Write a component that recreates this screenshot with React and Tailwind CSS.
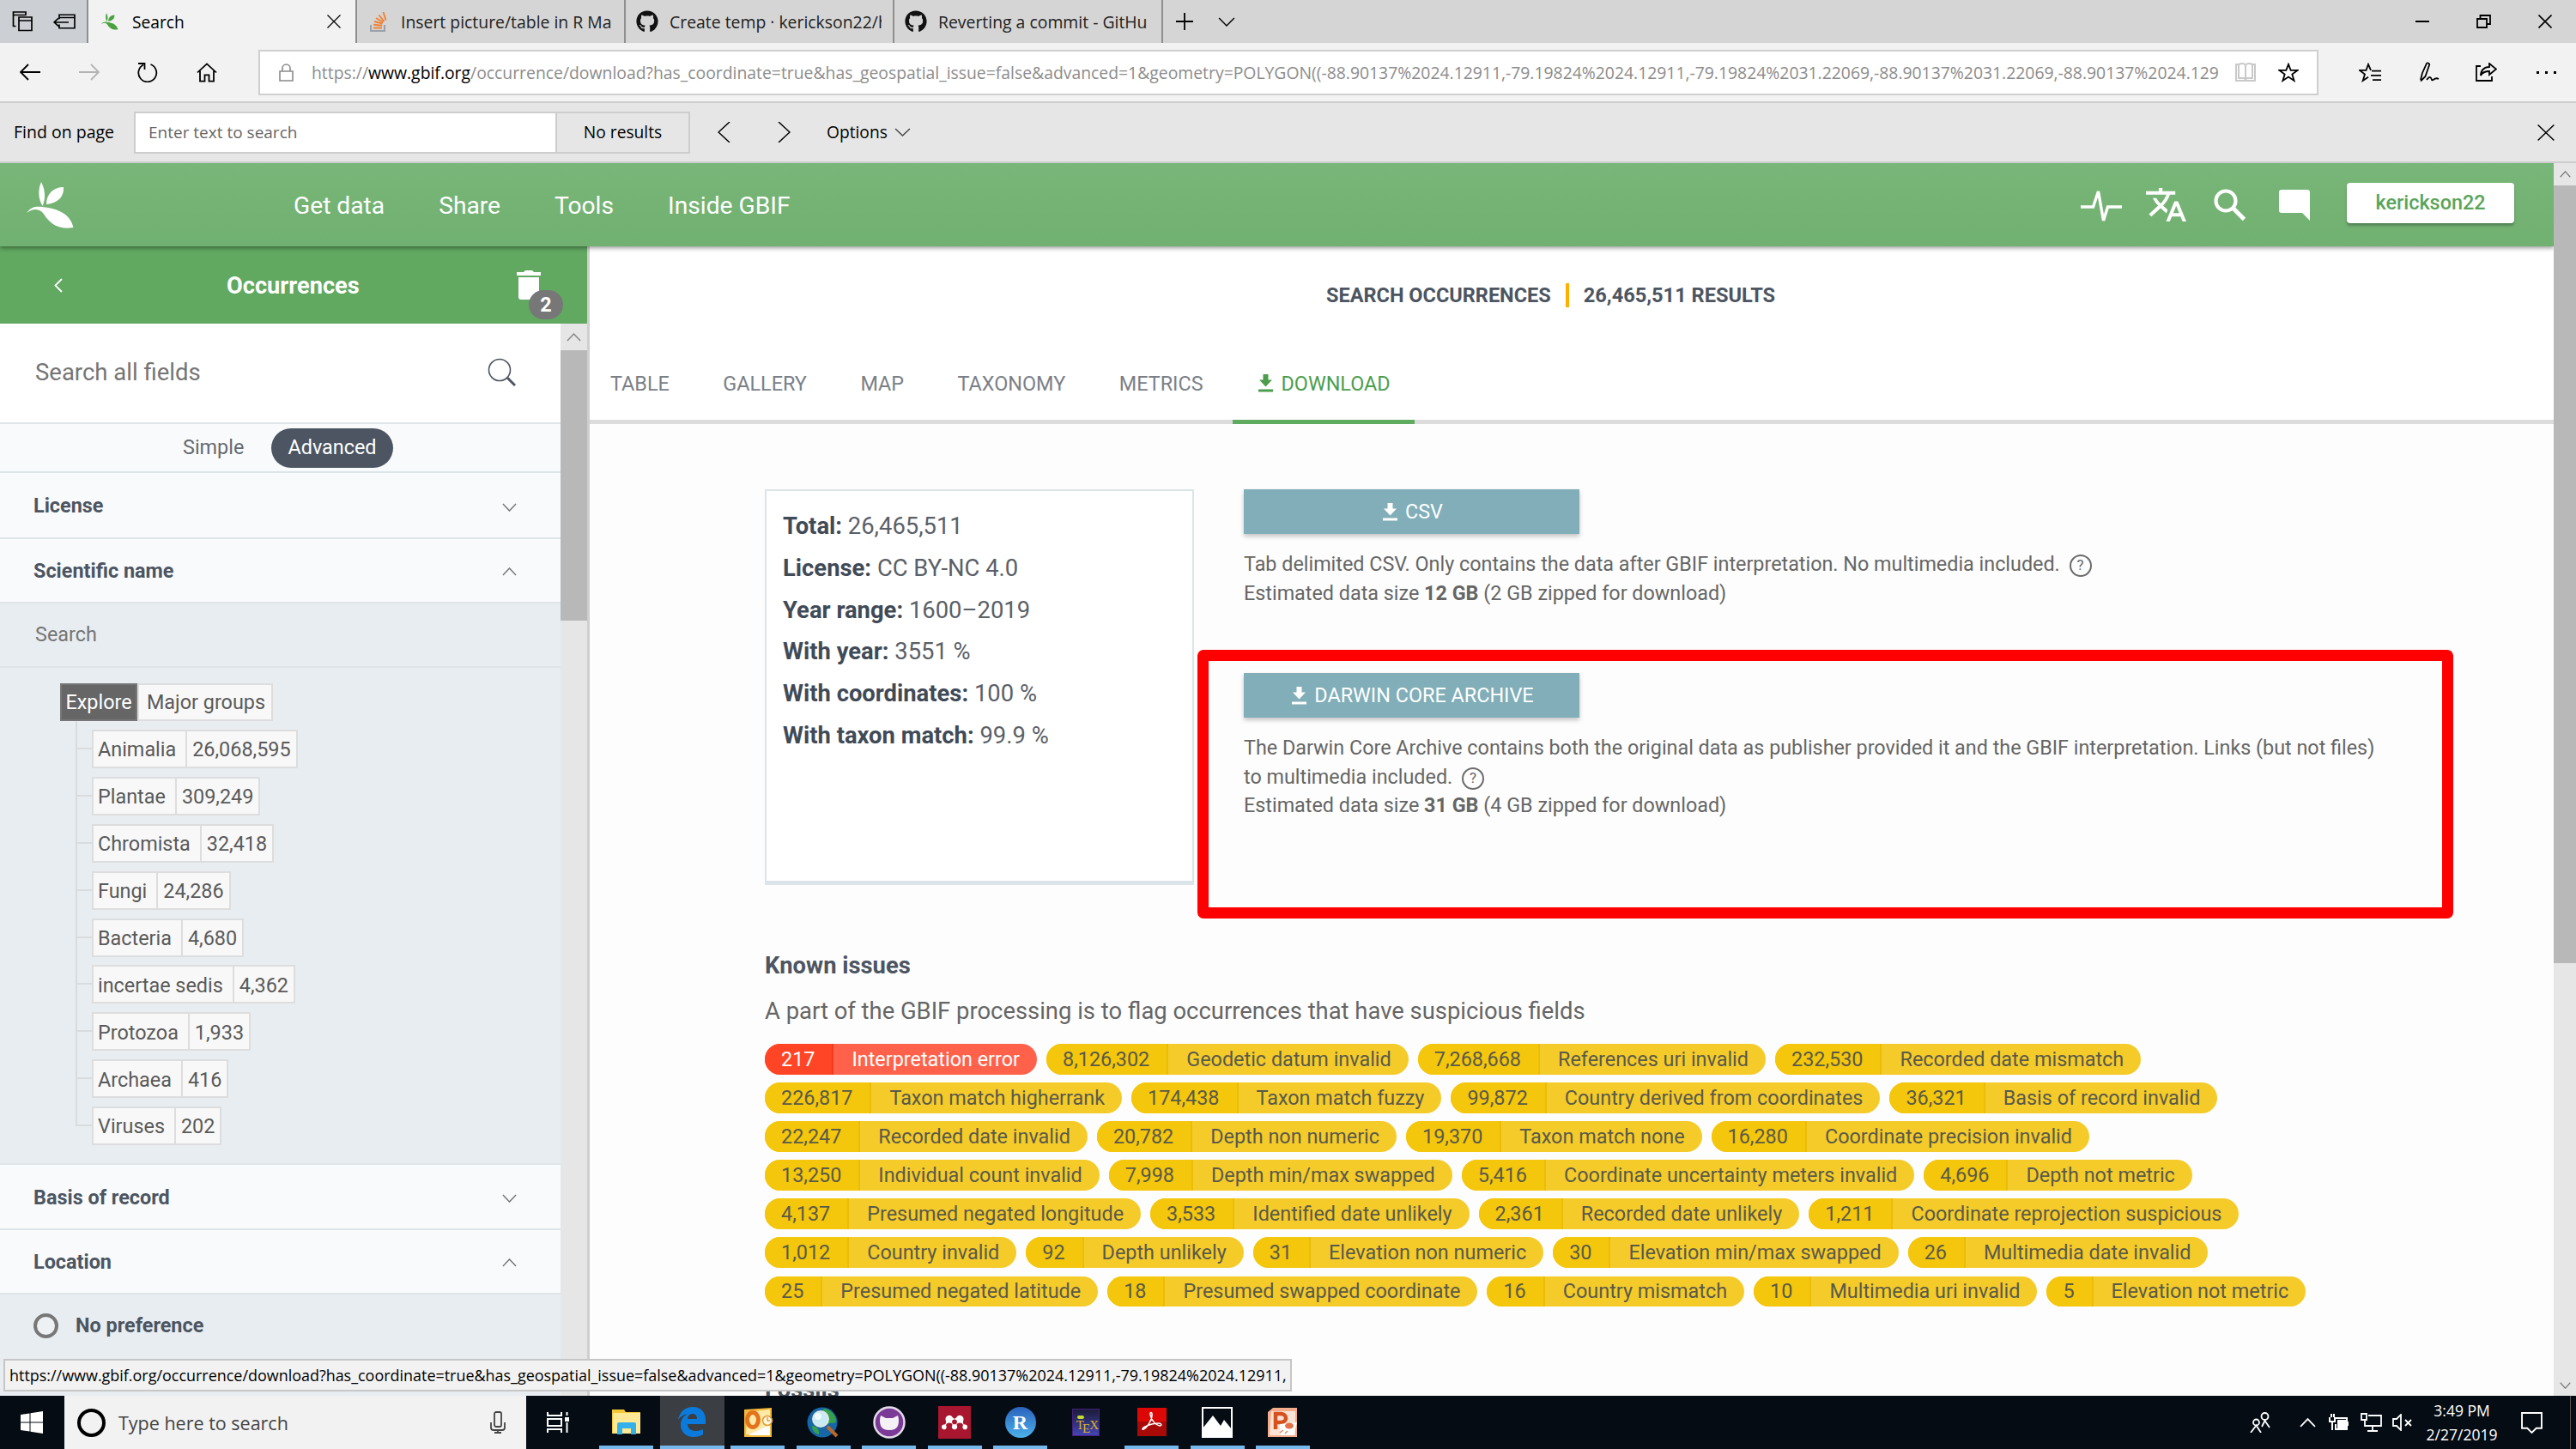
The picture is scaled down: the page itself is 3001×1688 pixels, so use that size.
import React from "react";
import { FaGithub, FaMendeley } from "react-icons/fa";

const TREE = [
  ["Animalia", "26,068,595"],
  ["Plantae", "309,249"],
  ["Chromista", "32,418"],
  ["Fungi", "24,286"],
  ["Bacteria", "4,680"],
  ["incertae sedis", "4,362"],
  ["Protozoa", "1,933"],
  ["Archaea", "416"],
  ["Viruses", "202"],
];

const ISSUES = [
  [["217", "Interpretation error"], ["8,126,302", "Geodetic datum invalid"], ["7,268,668", "References uri invalid"], ["232,530", "Recorded date mismatch"]],
  [["226,817", "Taxon match higherrank"], ["174,438", "Taxon match fuzzy"], ["99,872", "Country derived from coordinates"], ["36,321", "Basis of record invalid"]],
  [["22,247", "Recorded date invalid"], ["20,782", "Depth non numeric"], ["19,370", "Taxon match none"], ["16,280", "Coordinate precision invalid"]],
  [["13,250", "Individual count invalid"], ["7,998", "Depth min/max swapped"], ["5,416", "Coordinate uncertainty meters invalid"], ["4,696", "Depth not metric"]],
  [["4,137", "Presumed negated longitude"], ["3,533", "Identified date unlikely"], ["2,361", "Recorded date unlikely"], ["1,211", "Coordinate reprojection suspicious"]],
  [["1,012", "Country invalid"], ["92", "Depth unlikely"], ["31", "Elevation non numeric"], ["30", "Elevation min/max swapped"], ["26", "Multimedia date invalid"]],
  [["25", "Presumed negated latitude"], ["18", "Presumed swapped coordinate"], ["16", "Country mismatch"], ["10", "Multimedia uri invalid"], ["5", "Elevation not metric"]],
];

const STATS = [
  ["Total:", "26,465,511"],
  ["License:", "CC BY-NC 4.0"],
  ["Year range:", "1600–2019"],
  ["With year:", "3551 %"],
  ["With coordinates:", "100 %"],
  ["With taxon match:", "99.9 %"],
];

function Icon({ className, box = "0 0 24 24", w = 1.5, children }) {
  return (
    <svg className={className} viewBox={box} preserveAspectRatio="none" fill="none" stroke="currentColor" strokeWidth={w}>
      {children}
    </svg>
  );
}

const Cross = ({ className, w = 1.5 }) => (
  <Icon className={className} box="0 0 16 16" w={w}><path d="M.5.5l15 15M15.5.5l-15 15" /></Icon>
);
const Down = ({ className, w = 1.6 }) => (
  <Icon className={className} box="0 0 18 10" w={w}><path d="M1 1l8 8 8-8" /></Icon>
);
const Up = ({ className, w = 1.6 }) => (
  <Icon className={className} box="0 0 18 10" w={w}><path d="M1 9l8-8 8 8" /></Icon>
);
const DownloadIcon = () => (
  <svg className="w-[17px] h-[21px]" viewBox="0 0 17 21" fill="currentColor">
    <path d="M5.5 0h6v6.5h4.5L8.500 14.500 1 6.500h4.500zM0 17.500h17v3H0z" />
  </svg>
);
const Help = () => (
  <span className="inline-flex w-[26px] h-[26px] rounded-full border-2 border-[#6b6b6b] items-center justify-center text-[17px] leading-none align-middle ml-[5px]">?</span>
);
const Leaf = ({ className }) => (
  <svg className={className} viewBox="0 0 56 54" fill="currentColor">
    <path d="M17 0c4 8 6 18 1.500 28-5-8-5.500-19-1.500-28z" />
    <path d="M43 6c1 10-6 19-20 20C23 14 31 6 43 6z" />
    <path d="M0 36c5-7 11-8 18-7 20 2 33 9 36.500 24-17 3-27-4-34-15-5-7-12-8-20.500-2z" />
  </svg>
);

function Tab({ icon, label }) {
  return (
    <div className="w-[313px] h-[50px] border-l-2 border-[#8f8f8f] bg-[#d5d5d5] flex items-center pl-[11px] shrink-0">
      <div className="w-[28px] flex justify-center mr-[12px] shrink-0">{icon}</div>
      <div className="w-[247px] overflow-hidden whitespace-nowrap text-[19.4px] text-[#222] pt-[2px]">{label}</div>
    </div>
  );
}

function BrowserTop() {
  return (
    <div className="font-['Open_Sans',sans-serif] text-black">
      <div className="flex h-[50px] items-center bg-[#d5d5d5]">
        <div className="w-[101px] h-[50px] shrink-0 bg-[#ccd0d4] flex items-center pl-[14px] gap-[24px]">
          <Icon className="w-[24px] h-[24px]" w={1.7}>
            <path d="M4.500 17.500H1.500V1h14.500v4M1.500 4.500H16M8 22.500V7h15v15.500zM8 11h15" />
          </Icon>
          <Icon className="w-[26px] h-[18px]" box="0 0 26 20" w={1.7}>
            <path d="M7 7V1.500h18v17H7V14M7 5h18M18 11H1M6 6l-5 5 5 5" />
          </Icon>
        </div>
        <div className="w-[313px] h-[50px] shrink-0 bg-[#f2f2f2] border-l-2 border-[#8f8f8f] flex items-center pl-[15px]">
          <Leaf className="w-[20px] h-[20px] text-[#4aa13f]" />
          <span className="ml-[16px] text-[19.2px] grow pt-[2px]">Search</span>
          <Cross className="w-[16px] h-[16px] mr-[17px]" w={1.2} />
        </div>
        <Tab label="Insert picture/table in R Ma" icon={
          <Icon className="w-[20px] h-[23px]" box="0 0 20 23" w={2}>
            <path d="M1 15v7h16v-7" stroke="#9aa1a8" />
            <path d="M4 18.500h10M4.200 14.800l10 1M5 11l9.600 2.500M7 7l8.500 5M10.500 3.500l6 7.500M15.500 0l3 9.500" stroke="#ef8236" />
          </Icon>} />
        <Tab label="Create temp · kerickson22/h" icon={<FaGithub className="size-[26px] text-[#111]" />} />
        <Tab label="Reverting a commit - GitHu" icon={<FaGithub className="size-[26px] text-[#111]" />} />
        <div className="h-[50px] w-[2px] bg-[#8f8f8f]" />
        <Icon className="w-[20px] h-[20px] ml-[15px]" box="0 0 20 20" w={1.8}><path d="M10 0v20M0 10h20" /></Icon>
        <Down className="w-[20px] h-[11px] ml-[29px]" w={1.3} />
        <div className="grow" />
        <div className="w-[16px] h-[2px] bg-black" />
        <Icon className="w-[17px] h-[16px] ml-[55px]" box="0 0 17 16" w={1.8}><path d="M1 5h11v10H1zM4.500 5V1H16v10h-4" /></Icon>
        <Cross className="w-[16px] h-[16px] ml-[55px] mr-[28px]" w={1.6} />
      </div>
      <div className="flex h-[68px] items-center bg-[#f2f2f2]">
        <Icon className="w-[24px] h-[20px] ml-[23px]" box="0 0 24 20" w={1.8}><path d="M24 10H1M10 1l-9 9 9 9" /></Icon>
        <Icon className="w-[24px] h-[20px] ml-[45px] text-[#b4b4b4]" box="0 0 24 20" w={1.8}><path d="M0 10h23M14 1l9 9-9 9" /></Icon>
        <Icon className="w-[24px] h-[24px] ml-[44px]" w={1.8}><path d="M7 3.500A10.500 10.500 0 1 0 15.500 3M1 2h7.500v7" /></Icon>
        <Icon className="w-[24px] h-[23px] ml-[45px]" w={1.8}><path d="M1 12L12 1.500 23 12M4 10v12.500h5.500V15h5v7.500H20V10" /></Icon>
        <div className="w-[2400px] h-[53px] ml-[48px] bg-white border-2 border-[#cfcfcf] flex items-center">
          <Icon className="w-[17px] h-[21px] ml-[22px] text-[#8a8a8a]" box="0 0 17 21" w={1.6}><path d="M1 9h15v11H1zM4 9V5.500a4.500 4.500 0 0 1 9 0V9" /></Icon>
          <div className="ml-[21px] w-[2228px] shrink-0 whitespace-nowrap overflow-hidden pt-[2px] text-[19.37px] text-[#8c8c8c]">
            https://<span className="text-black">www.gbif.org</span>/occurrence/download?has_coordinate=true&amp;has_geospatial_issue=false&amp;advanced=1&amp;geometry=POLYGON((-88.90137%2024.12911,-79.19824%2024.12911,-79.19824%2031.22069,-88.90137%2031.22069,-88.90137%2024.129
          </div>
          <Icon className="w-[24px] h-[22px] ml-[13px] text-[#c9c9c9]" box="0 0 24 22" w={2}><path d="M1 2h3v16h7l1 2 1-2h7V2h3v19H1zM4 2c4-1.500 7-.500 8 1 1-1.500 4-2.500 8-1M12 3v16" /></Icon>
          <Icon className="w-[24px] h-[23px] ml-[26px]" w={1.8}><path d="M12 2l2.700 7.300h7.800l-6.200 4.800 2.300 7.800L12 17.300l-6.600 4.600 2.300-7.800L1.500 9.300h7.800z" /></Icon>
        </div>
        <Icon className="w-[26px] h-[23px] ml-[47px]" box="0 0 26 24" w={1.8}><path d="M14 9.300L11 2 8.500 9.300H1l6 4.800-2.300 7.800L11 17.500M15 10h11M14 15.500h12M16 21h10" /></Icon>
        <Icon className="w-[24px] h-[24px] ml-[44px]" w={1.8}><path d="M2 21L4 13 9 2c1-1.500 4 0 3 2L7.500 17 2 22.500M9 21c4-5 5-3 6 0 2 2 3-4 8-1" /></Icon>
        <Icon className="w-[25px] h-[22px] ml-[42px]" box="0 0 25 22" w={1.8}><path d="M6 4H1v17h18v-5M16 1l8 6.500-8 6.500v-4c-5 0-8 1-10 5 0-6 4-10 10-10z" /></Icon>
        <div className="flex gap-[7px] ml-[46px]">
          <div className="size-[3px] bg-black" /><div className="size-[3px] bg-black" /><div className="size-[3px] bg-black" />
        </div>
      </div>
      <div className="flex h-[72px] items-center bg-[#e6e6e6] border-y-2 border-[#cdcdcd] text-[19.2px]">
        <div className="w-[156px] pl-[16px] whitespace-nowrap text-[19.5px]">Find on page</div>
        <div className="w-[493px] h-[49px] bg-white border-2 border-[#cdcdcd] flex items-center pl-[15px] text-[#666] text-[19px]">Enter text to search</div>
        <div className="w-[155px] h-[49px] border-y-2 border-r-2 border-[#cdcdcd] flex items-center justify-center">No results</div>
        <Icon className="w-[15px] h-[24px] ml-[32px]" box="0 0 15 24" w={1.5}><path d="M14 0L1 12l13 12" /></Icon>
        <Icon className="w-[15px] h-[24px] ml-[55px]" box="0 0 15 24" w={1.5}><path d="M1 0l13 12L1 24" /></Icon>
        <div className="ml-[42px]">Options</div>
        <Down className="w-[19px] h-[10px] ml-[8px] text-[#444]" w={1.3} />
        <div className="grow" />
        <Cross className="w-[20px] h-[19px] mr-[25px]" w={1.2} />
      </div>
    </div>
  );
}

function SiteHeader() {
  return (
    <div className="relative z-10 h-[97px] bg-linear-to-b from-[#79b679] to-[#70b070] shadow-[0_2px_5px_rgba(0,0,0,0.4)] flex items-center text-white text-[28.2px]">
      <Leaf className="w-[56px] h-[54px] ml-[31px]" />
      <div className="flex gap-[63px] ml-[255px] whitespace-nowrap pt-[3px]">
        <span>Get data</span><span>Share</span><span>Tools</span><span>Inside GBIF</span>
      </div>
      <div className="grow" />
      <Icon className="w-[48px] h-[42px]" box="0 0 48 42" w={3.4}><path d="M0 23h14.500l6-18 6 34 5-16H48" /></Icon>
      <svg className="w-[47px] h-[43px] ml-[28px]" viewBox="1 1 22 22" preserveAspectRatio="none" fill="currentColor">
        <path d="M12.870 15.070l-2.540-2.510.03-.030c1.740-1.940 2.980-4.170 3.710-6.530H17V4h-7V2H8v2H1v1.990h11.170C11.500 7.920 10.440 9.750 9 11.350 8.070 10.320 7.300 9.190 6.690 8h-2c.73 1.630 1.730 3.170 2.980 4.560l-5.090 5.020L4 19l5-5 3.110 3.110.76-2.040zM18.500 10h-2L12 22h2l1.120-3h4.750L21 22h2l-4.500-12zm-2.620 7l1.620-4.330L19.120 17h-3.240z" />
      </svg>
      <Icon className="w-[37px] h-[37px] ml-[32px]" box="0 0 37 37" w={4.2}><circle cx="14" cy="14" r="11.500" /><path d="M22 22l13.500 13.500" strokeWidth="5" /></Icon>
      <svg className="w-[36px] h-[36px] ml-[39px]" viewBox="0 0 36 36" fill="currentColor"><path d="M3 0h30q3 0 3 3v33l-9-9H3q-3 0-3-3V3q0-3 3-3z" /></svg>
      <div className="w-[195px] h-[47px] mb-[5px] ml-[43px] mr-[46px] rounded-[4px] bg-white shadow-[0_3px_3px_rgba(0,0,0,0.25)] text-[#5aa55a] text-[23.4px] font-medium flex items-center justify-center pt-[1px]">kerickson22</div>
    </div>
  );
}

const Section = ({ label, open, className }) => (
  <div className={`flex items-center justify-between pl-[39px] pr-[51px] bg-[#f9fafc] border-b-2 border-[#dde5e9] font-bold ${className}`}>
    <span className="pt-[2px]">{label}</span>
    {open ? <Up className="w-[17px] h-[10px] mt-[2px] text-[#777]" /> : <Down className="w-[17px] h-[10px] mt-[4px] text-[#777]" />}
  </div>
);

function Sidebar() {
  return (
    <div className="w-[687px] shrink-0 border-r-3 border-[#cfcfcf] flex flex-col text-[#4c5561] text-[23.4px]">
      <div className="h-[90px] shrink-0 bg-[#61a861] flex items-center text-white">
        <Icon className="w-[10px] h-[17px] ml-[63px]" box="0 0 10 17" w={1.8}><path d="M9 1L1.500 8.500 9 16" /></Icon>
        <span className="ml-[191px] text-[27.2px] font-bold w-[155px] pt-[3px]">Occurrences</span>
        <div className="relative ml-[183px]">
          <svg className="w-[28px] h-[34px]" viewBox="0 0 28 34" fill="currentColor"><path d="M0 2h8l2-2h8l2 2h8v4H0zM2 8h24v23q0 3-3 3H5q-3 0-3-3z" /></svg>
          <div className="absolute left-[14px] top-[23px] w-[40px] h-[34px] rounded-full bg-[#777] font-bold flex items-center justify-center">2</div>
        </div>
      </div>
      <div className="flex grow">
        <div className="w-[653px] flex flex-col bg-[#e8edf1]">
          <div className="h-[117px] bg-white border-b-2 border-[#dde5e9] flex items-center justify-between pl-[41px] pr-[52px] text-[27.5px] text-[#757575]">
            <span className="-mt-[1px]">Search all fields</span>
            <Icon className="w-[33px] h-[33px] -mt-[3px] text-[#4c5561]" box="0 0 33 33" w={1.6}><circle cx="14" cy="14" r="12.500" /><path d="M23 23l9 9" strokeWidth="3" /></Icon>
          </div>
          <div className="h-[57px] bg-[#f9fafc] border-b-2 border-[#dde5e9] flex items-center pl-[213px]">
            <span className="w-[103px] text-[#656a70]">Simple</span>
            <span className="w-[142px] h-[46px] rounded-full bg-[#4c5561] text-white flex items-center justify-center">Advanced</span>
          </div>
          <Section label="License" className="h-[77px]" />
          <Section label="Scientific name" open className="h-[75px]" />
          <div className="h-[75px] border-b-2 border-[#dde3e7] flex items-center pl-[41px] text-[#757575]">Search</div>
          <div className="h-[579px] pt-[18px] text-[#5a5a5a] border-b-2 border-[#dde5e9]">
            <div className="flex h-[44px] ml-[70px]">
              <div className="w-[90px] bg-[#666] border-2 border-[#777] text-white flex items-center justify-center pt-[1px]">Explore</div>
              <div className="w-[158px] bg-[#f8f8f8] border-2 border-[#ddd] flex items-center justify-center pl-[2px] pt-[1px]">Major groups</div>
            </div>
            <div className="ml-[88px]">
              {TREE.map(([name, n], i) => (
                <div key={name} className="flex h-[54.9px]">
                  <div className="w-[19px]">
                    <div className="h-[33px] border-l-2 border-b-2 border-[#d9dcde]" />
                    {i < TREE.length - 1 && <div className="h-[22px] border-l-2 border-[#d9dcde]" />}
                  </div>
                  <div className="mt-[10px] h-[45px] border-2 border-[#ddd] bg-[#f8f8f8] flex">
                    <span className="flex items-center pl-[5px] pr-[11px] pt-[2px] border-r-2 border-[#ddd]">{name}</span>
                    <span className="flex items-center px-[6px] pt-[2px]">{n}</span>
                  </div>
                </div>
              ))}
            </div>
          </div>
          <Section label="Basis of record" className="h-[76px]" />
          <Section label="Location" open className="h-[75px]" />
          <div className="flex h-[72px] items-center pl-[39px] font-bold">
            <div className="size-[29px] rounded-full border-4 border-[#777] bg-[#eef1f4] mr-[20px]" />
            No preference
          </div>
        </div>
        <div className="w-[31px] bg-[#e6e6e6] flex flex-col items-center pt-[11px]">
          <Up className="w-[17px] h-[10px] text-[#888]" />
          <div className="w-full h-[315px] mt-[10px] bg-[#b8b8b8]" />
        </div>
      </div>
    </div>
  );
}

const DownloadButton = ({ children }) => (
  <div className="w-[391px] h-[52px] bg-[#81aeb8] shadow-[0_3px_5px_rgba(0,0,0,0.22)] text-white flex items-center justify-center gap-[9px] pl-[3px] pt-[1px]">
    <DownloadIcon />{children}
  </div>
);

function Chip({ n, label, error }) {
  return (
    <div className={error ? "flex h-full rounded-full overflow-hidden bg-[#ff614a] text-white" : "flex h-full rounded-full overflow-hidden bg-[#f5cb2a] text-[#5a5a4a]"}>
      <span className={error ? "flex items-center pl-[19px] pr-[20px] bg-[#ff4526] border-r-2 border-[#f03c1e]" : "flex items-center pl-[19px] pr-[20px] bg-[#f4c60c] border-r-2 border-[#eabd08]"}>{n}</span>
      <span className="flex items-center pl-[21px] pr-[20px]">{label}</span>
    </div>
  );
}

function Main() {
  return (
    <div className="relative grow bg-[#fdfdfd] text-[#666] text-[23.4px] whitespace-nowrap">
      <div className="h-[207px] bg-white border-b-5 border-[#dcdcdc] flex flex-col">
        <div className="flex items-center pl-[858px] pt-[42px] text-[#4c5561] font-bold">
          <span className="text-[23.5px]">SEARCH OCCURRENCES</span>
          <div className="w-[4px] h-[28px] bg-[#ffaf00] mx-[17px]" />
          <span className="text-[23.6px]">26,465,511 RESULTS</span>
        </div>
        <div className="flex pl-[24px] mt-auto -mb-[5px] h-[95px] gap-[62.5px] text-[#7b8087] leading-[96px]">
          <span>TABLE</span>
          <span>GALLERY</span>
          <span>MAP</span>
          <span>TAXONOMY</span>
          <span>METRICS</span>
          <span className="-ml-[28px] w-[212px] border-b-5 border-[#5fab5f] text-[#4c9e4c] flex items-center justify-center gap-[9px] pt-[5px] pl-[2px]"><DownloadIcon />DOWNLOAD</span>
        </div>
      </div>
      <div className="flex pl-[204px] pt-[76px]">
        <div className="w-[500px] h-[461px] bg-white border-2 border-b-5 border-[#dbe4e9] pl-[19px] pt-[17px] text-[27.4px] text-[#5b6067]">
          {STATS.map(([k, v]) => (
            <div key={k} className="h-[48.8px] leading-[48.8px]"><b className="text-[#414a57]">{k}</b> {v}</div>
          ))}
        </div>
        <div className="ml-[58px]">
          <DownloadButton>CSV</DownloadButton>
          <div className="mt-[19px] h-[143px] leading-[33px] text-[23.35px]">
            <div className="h-[34px]">Tab delimited CSV. Only contains the data after GBIF interpretation. No multimedia included. <Help /></div>
            <div>Estimated data size <b>12 GB</b> (2 GB zipped for download)</div>
          </div>
          <DownloadButton>DARWIN CORE ARCHIVE</DownloadButton>
          <div className="mt-[18px] leading-[34px] text-[23.35px]">
            <div>The Darwin Core Archive contains both the original data as publisher provided it and the GBIF interpretation. Links (but not files)</div>
            <div className="h-[33px]">to multimedia included. <Help /></div>
            <div>Estimated data size <b>31 GB</b> (4 GB zipped for download)</div>
          </div>
        </div>
      </div>
      <div className="pl-[204px]">
        <div className="mt-[73px] h-[42px] leading-[43px] text-[27.35px] font-bold text-[#4c5561]">Known issues</div>
        <div className="mt-[11px] h-[42px] leading-[43px] text-[27.4px]">A part of the GBIF processing is to flag occurrences that have suspicious fields</div>
        <div className="mt-[17px]">
          {ISSUES.map((row, r) => (
            <div key={r} className="flex h-[35.5px] mb-[9.6px] gap-[11px]">
              {row.map(([n, label], i) => <Chip key={label} n={n} label={label} error={r === 0 && i === 0} />)}
            </div>
          ))}
        </div>
        <div className="mt-[74px] h-[32px] leading-[46px] overflow-hidden text-[27.35px] font-bold text-[#4c5561]">Fossils</div>
      </div>
      <div className="absolute left-[708px] top-[470px] w-[1463px] h-[313px] rounded-[7px] border-[13px] border-[#ff0000]" />
    </div>
  );
}

function TaskItem({ children, active, idle }) {
  return (
    <div className={active ? "w-[75px] h-full bg-[#3b3e42] flex flex-col items-center" : "w-[63px] h-full flex flex-col items-center"}>
      <div className="h-[58px] flex items-center pt-[3px]">{children}</div>
      <div className={idle ? "hidden" : "h-[4px] w-full bg-[#76b9ed]"} />
    </div>
  );
}

function Taskbar() {
  return (
    <div className="h-[62px] bg-[#050c14] flex items-center text-white font-['Open_Sans',sans-serif] shrink-0">
      <svg className="w-[26px] h-[26px] ml-[24px]" viewBox="0 0 26 26" fill="currentColor"><path d="M0 4l10.500-1.500v10H0zM11.500 2.300L26 0v12.500H11.500zM0 13.500h10.500v10L0 22zM11.500 13.500H26V26l-14.500-2.200z" /></svg>
      <div className="w-[538px] h-[62px] ml-[25px] bg-[#f2f2f2] flex items-center text-[#444] text-[21.5px]">
        <div className="size-[33px] ml-[15px] rounded-full border-4 border-black" />
        <span className="ml-[15px] grow pt-[1px]">Type here to search</span>
        <Icon className="w-[18px] h-[26px] mr-[24px]" box="0 0 18 26" w={1.8}><rect x="5" y="1" width="8" height="17" rx="2" /><path d="M1 13v6q0 3 3 3h10q3 0 3-3v-6M9 22v3M5 25h8" /></Icon>
      </div>
      <Icon className="w-[27px] h-[24px] ml-[24px]" box="0 0 27 24" w={2}>
        <path d="M1 0v4h16V0M1 24v-4h16v4M1 8h16v8H1zM23.500 0v4M23.500 12v12" /><path d="M21 6h5v5h-5z" fill="currentColor" stroke="none" />
      </Icon>
      <div className="flex h-[62px] ml-[34px]">
        <div className="flex gap-[13.5px] h-full">
          <TaskItem>
            <svg className="w-[34px] h-[29px]" viewBox="0 0 34 29"><path d="M0 0h14l2 3h17v25H0z" fill="#f5c733" /><path d="M1 4h32v24H1z" fill="#ffe896" /><path d="M6 29V17q0-2 2-2h18q2 0 2 2v12h-6v-7H12v7z" fill="#33b1e8" /></svg>
          </TaskItem>
          <div className="-mx-[6px] h-full">
            <TaskItem active>
              <svg className="w-[32px] h-[35px]" viewBox="0 0 32 35" fill="#0a7bdc"><path d="M0 15C2 5 9 0 17 0c9 0 15 6 15 15v5H11c0 6 5 8 10 8 3 0 6-1 8-2v6c-3 2-7 3-11 3C9 35 3 29 3 21c0-6 3-10 8-13-5 1-8 3-11 7zm11-1h11c0-4-2-6-5-6s-6 2-6 6z" /></svg>
            </TaskItem>
          </div>
          <TaskItem>
            <svg className="w-[36px] h-[34px]" viewBox="0 0 36 34"><path d="M2 2L34 0v34H2z" fill="#f2b93c" /><path d="M6 5l26-3v29H4z" fill="#ffe9a6" /><path d="M8 31l24-11v12H8z" fill="#fff" /><ellipse cx="12" cy="14" rx="6.500" ry="8.500" fill="none" stroke="#e1741c" strokeWidth="5" /><circle cx="29" cy="15" r="5.500" fill="#fff6dc" stroke="#dd9a2b" strokeWidth="1.500" /><path d="M29 11v4h3" fill="none" stroke="#c27a12" /></svg>
          </TaskItem>
          <TaskItem>
            <svg className="w-[38px] h-[36px]" viewBox="0 0 38 36"><circle cx="18" cy="18" r="17.500" fill="#1766a8" /><path d="M20 2c8 1 14 7 14 15-3 4-6 0-9 3s-5-5-8-8 0-7 3-10zM6 22c5 0 9 4 8 10C9 31 6 27 6 22z" fill="#36a04a" /><path d="M24 23l11 11" stroke="#b9682b" strokeWidth="4" /><circle cx="16" cy="14" r="9" fill="#c9e9f5" stroke="#dfe6ea" strokeWidth="2" /><circle cx="13" cy="11" r="4" fill="#eefaff" /></svg>
          </TaskItem>
          <TaskItem>
            <svg className="w-[38px] h-[38px]" viewBox="0 0 38 38"><circle cx="19" cy="19" r="17.500" fill="#7b3a97" stroke="#e3dbe8" strokeWidth="2.500" /><path d="M9 11l6 3h8l6-3q2 6 0 12-2 5-10 5T9 23q-2-6 0-12z" fill="#f5f2f7" /></svg>
          </TaskItem>
          <TaskItem>
            <div className="size-[38px] bg-[#a9162f] flex items-center justify-center"><FaMendeley className="size-[30px] text-white" /></div>
          </TaskItem>
          <TaskItem>
            <div className="size-[36px] rounded-full bg-linear-to-b from-[#2b62bd] to-[#4db2ea] flex items-center justify-center font-['Liberation_Serif',serif] font-bold text-[24px] leading-none">R</div>
          </TaskItem>
          <TaskItem idle>
            <div className="w-[32px] h-[32px] bg-linear-to-b from-[#1c1c38] to-[#4444b8] border border-[#45207c] font-['Liberation_Serif',serif] text-[#d9b32a] text-[15px] leading-none flex flex-col">
              <div className="w-[8px] h-[5px] rounded-full bg-[#c3dc2c] ml-[5px] mt-[7px]" />
              <div className="flex justify-end"><span>T</span><span className="pt-[4px] -ml-[2px]">E</span><span className="-ml-[1px]">X</span></div>
            </div>
          </TaskItem>
          <TaskItem>
            <svg className="w-[34px] h-[33px]" viewBox="0 0 34 33"><path d="M0 0h34v33H0z" fill="#a80a08" /><path d="M0 0h34v16H0z" fill="#dd0806" /><path d="M7 25c4-1 11-12 10-18 0-2-3-2-2 1 1 6 6 12 11 13 3 0 2-3-1-3-6 0-12 2-16 4-3 1-4 4-2 3z" fill="none" stroke="#fff" strokeWidth="1.500" /></svg>
          </TaskItem>
          <TaskItem>
            <svg className="w-[36px] h-[36px]" viewBox="0 0 36 36"><path d="M1 1h34v34H1z" fill="#050c14" stroke="#fff" strokeWidth="2" /><path d="M1 25L13 10l9 12 4-7 9 11v9H1z" fill="#fff" /></svg>
          </TaskItem>
          <TaskItem>
            <svg className="w-[35px] h-[34px]" viewBox="0 0 35 34"><path d="M6 0h28v34H0V5z" fill="#f3ad8a" /><path d="M4 4h28v28H2z" fill="#fbe3d6" /><path d="M9 25V7h6c8 0 8 10 0 10H9" fill="none" stroke="#d5521f" strokeWidth="4.500" /><path d="M14 19l20-2-4 15H15z" fill="#fff" /><ellipse cx="25" cy="21" rx="5" ry="3.500" fill="#e5704a" /><path d="M14 29l4-3M20 30l3-3" stroke="#e08a6a" strokeWidth="1.500" /></svg>
          </TaskItem>
        </div>
      </div>
      <div className="grow" />
      <Icon className="w-[24px] h-[24px]" w={1.8}><circle cx="17.500" cy="5" r="4" /><path d="M14 17l3.500-7 5.500 8" /><circle cx="7.500" cy="12" r="3.500" /><path d="M1 24l6.500-8.500L13 24" /></Icon>
      <Up className="w-[19px] h-[11px] ml-[34px]" w={1.7} />
      <Icon className="w-[24px] h-[20px] ml-[15px]" box="0 0 24 20" w={2}><path d="M8 5h13v13H8v-6M22 9v5M1 4v5h6V4M3 0v4M6 0v4M4 9v10" /><path d="M11 8h8v8h-8z" fill="currentColor" /></Icon>
      <Icon className="w-[26px] h-[22px] ml-[13px]" box="0 0 26 22" w={1.8}><path d="M9 3h15v12H5V9M14 15v6M8 21h12M1 1h6v7H1z" /></Icon>
      <Icon className="w-[24px] h-[20px] ml-[11px]" box="0 0 24 20" w={1.8}><path d="M1 6h4l5-5v18l-5-5H1zM15 7l7 7M22 7l-7 7" /></Icon>
      <div className="ml-[12px] w-[90px] text-center text-[17.500px] leading-[28px]"><div>3:49 PM</div><div>2/27/2019</div></div>
      <Icon className="w-[25px] h-[25px] ml-[24px]" w={1.8}><path d="M1 1h22v17h-6l-5 5-5-5H1z" /></Icon>
      <div className="w-[1px] h-full bg-[#555] ml-[32px] mr-[6px]" />
    </div>
  );
}

export default function App() {
  return (
    <div className="w-[3001px] h-[1688px] overflow-hidden flex flex-col font-['Roboto',sans-serif] leading-[1.3]">
      <BrowserTop />
      <div className="relative flex h-[1436px]">
        <div className="w-[2975px] flex flex-col overflow-hidden">
          <SiteHeader />
          <div className="flex h-[1339px]">
            <Sidebar />
            <Main />
          </div>
        </div>
        <div className="w-[26px] bg-[#e6e6e6] flex flex-col items-center pt-[9px] pb-[8px]">
          <Up className="w-[13px] h-[8px] text-[#777]" />
          <div className="w-full h-[906px] mt-[9px] bg-[#b8b8b8]" />
          <Down className="w-[13px] h-[8px] mt-auto text-[#777]" />
        </div>
        <div className="absolute z-20 left-[4px] top-[1393px] w-[1501px] h-[38px] bg-[#f2f2f2] border-2 border-[#c6c6c6] flex items-center pl-[5px] pt-[2px] overflow-hidden whitespace-nowrap text-black font-['Open_Sans',sans-serif] text-[17.940px]">
          https://www.gbif.org/occurrence/download?has_coordinate=true&amp;has_geospatial_issue=false&amp;advanced=1&amp;geometry=POLYGON((-88.90137%2024.12911,-79.19824%2024.12911,
        </div>
      </div>
      <Taskbar />
    </div>
  );
}
